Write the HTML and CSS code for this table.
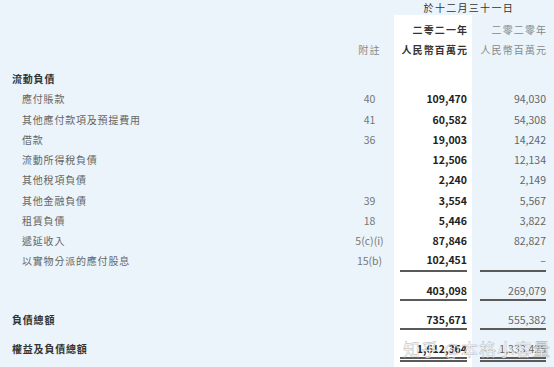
FILE: index.html
```html
<!DOCTYPE html>
<html lang="zh-Hant">
<head>
<meta charset="utf-8">
<title>流動負債</title>
<link rel="stylesheet" href="styles.css">
</head>
<body>
<div class="page">
  <div class="period"><span class="period-text">於十二月三十一日</span></div>
  <div class="table">
    <div class="row head"><span class="lbl"></span><span class="note"></span><span class="c21"><span class="v">二零二一年</span></span><span class="c20"><span class="v">二零二零年</span></span></div>
    <div class="row head"><span class="lbl"></span><span class="note">附註</span><span class="c21"><span class="v">人民幣百萬元</span></span><span class="c20"><span class="v">人民幣百萬元</span></span></div>
    <div class="spacer"></div>
    <div class="row sec"><span class="lbl">流動負債</span><span class="note"></span><span class="c21"></span><span class="c20"></span></div>
    <div class="row"><span class="lbl">應付賬款</span><span class="note">40</span><span class="c21"><span class="v">109,470</span></span><span class="c20"><span class="v">94,030</span></span></div>
    <div class="row"><span class="lbl">其他應付款項及預提費用</span><span class="note">41</span><span class="c21"><span class="v">60,582</span></span><span class="c20"><span class="v">54,308</span></span></div>
    <div class="row"><span class="lbl">借款</span><span class="note">36</span><span class="c21"><span class="v">19,003</span></span><span class="c20"><span class="v">14,242</span></span></div>
    <div class="row"><span class="lbl">流動所得稅負債</span><span class="note"></span><span class="c21"><span class="v">12,506</span></span><span class="c20"><span class="v">12,134</span></span></div>
    <div class="row"><span class="lbl">其他稅項負債</span><span class="note"></span><span class="c21"><span class="v">2,240</span></span><span class="c20"><span class="v">2,149</span></span></div>
    <div class="row"><span class="lbl">其他金融負債</span><span class="note">39</span><span class="c21"><span class="v">3,554</span></span><span class="c20"><span class="v">5,567</span></span></div>
    <div class="row"><span class="lbl">租賃負債</span><span class="note">18</span><span class="c21"><span class="v">5,446</span></span><span class="c20"><span class="v">3,822</span></span></div>
    <div class="row"><span class="lbl">遞延收入</span><span class="note">5(c)(i)</span><span class="c21"><span class="v">87,846</span></span><span class="c20"><span class="v">82,827</span></span></div>
    <div class="row ul"><span class="lbl">以實物分派的應付股息</span><span class="note">15(b)</span><span class="c21"><span class="v">102,451</span></span><span class="c20"><span class="v">–</span></span></div>
    <div class="row tot ul"><span class="lbl"></span><span class="note"></span><span class="c21"><span class="v">403,098</span></span><span class="c20"><span class="v">269,079</span></span></div>
    <div class="row tot sec ul"><span class="lbl">負債總額</span><span class="note"></span><span class="c21"><span class="v">735,671</span></span><span class="c20"><span class="v">555,382</span></span></div>
    <div class="row tot sec dbl"><span class="lbl">權益及負債總額</span><span class="note"></span><span class="c21"><span class="v">1,612,364</span></span><span class="c20"><span class="v">1,333,425</span></span></div>
  </div>
  <div class="watermark">知乎 @本格小容量</div>
</div>
</body>
</html>
```

FILE: styles.css
```css
html, body {
  margin: 0;
  padding: 0;
}
body {
  background: #eaf4fa;
  font-family: "Noto Sans CJK TC", "Noto Sans", sans-serif;
}
.page {
  position: relative;
  width: 554px;
  height: 367px;
  overflow: hidden;
}
.period {
  display: flex;
  justify-content: flex-end;
  height: 15px;
  padding-right: 40px;
  line-height: 15px;
  font-size: 10px;
  color: #333;
  white-space: nowrap;
}
.period-text {
  letter-spacing: 1.3px;
}
.table {
  padding-top: 5px;
  height: 347px;
  background: linear-gradient(90deg, transparent 394px, #ffffff 394px, #ffffff 472px, transparent 472px);
}
.row {
  display: grid;
  grid-template-columns: 350px 44px 78px 82px;
  height: 20.25px;
  line-height: 20.25px;
  align-items: start;
}
.head {
  height: 20px;
  line-height: 20px;
}
.spacer {
  height: 9px;
}
.lbl {
  padding-left: 22px;
  color: #666;
  font-size: 10px;
  letter-spacing: 0.8px;
  white-space: nowrap;
}
.sec .lbl {
  padding-left: 12px;
  color: #333;
  font-weight: 700;
}
.note {
  text-align: center;
  padding-right: 5px;
  color: #777;
  font-size: 10.5px;
  white-space: nowrap;
}
.head .note {
  font-size: 10px;
  letter-spacing: 1.2px;
  color: #888;
}
.c21 {
  padding: 0 5px 0 6px;
  text-align: right;
  font-weight: 700;
  color: #222;
  font-size: 10.5px;
  white-space: nowrap;
}
.c20 {
  padding: 0 8px;
  text-align: right;
  color: #666;
  font-size: 10.5px;
  white-space: nowrap;
}
.v {
  display: block;
}
.head .v {
  font-size: 10px;
  letter-spacing: 1.1px;
  margin-right: -1.1px;
}
.head .c21 {
  color: #333;
  padding-left: 0;
}
.head .c20 {
  color: #888;
  padding-left: 0;
}
.ul .v {
  line-height: 18.5px;
  border-bottom: 2px solid #5a5a5a;
}
.tot {
  height: auto;
  line-height: 16px;
  padding-top: 11px;
}
.tot .lbl {
  line-height: 16px;
}
.tot.ul .v {
  line-height: 16px;
}
.dbl .v {
  line-height: 16px;
  border-bottom: 5px double #5a5a5a;
}
.watermark {
  position: absolute;
  left: 403px;
  top: 336px;
  font-size: 17px;
  letter-spacing: 1px;
  color: rgba(255, 255, 255, 0.85);
  -webkit-text-stroke: 0.4px rgba(120, 120, 120, 0.6);
  white-space: nowrap;
}
```
